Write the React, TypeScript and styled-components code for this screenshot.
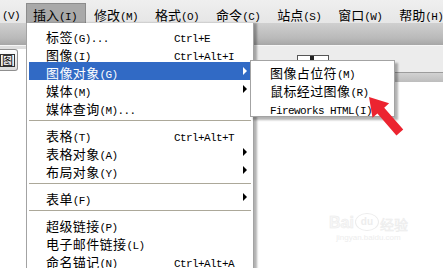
import React from 'react';
import styled, { createGlobalStyle, css } from 'styled-components';

const Global = createGlobalStyle`
  html, body { margin: 0; padding: 0; background: #ffffff; }
  body { font-family: "Noto Sans CJK SC", "Liberation Sans", sans-serif; }
`;

const Screen = styled.div`
  position: relative;
  width: 443px;
  height: 268px;
  overflow: hidden;
  display: flex;
  flex-direction: column;
  background: #ffffff;
`;

const Han = styled.span`
  font-family: "Noto Sans CJK SC", sans-serif;
  font-size: 13px;
  vertical-align: baseline;
`;

const Mono = styled.span`
  font-family: "Liberation Mono", monospace;
  font-size: 11px;
  letter-spacing: -0.6px;
  vertical-align: baseline;
`;

const splitRuns = (s: string) => s.match(/[\u3400-\u9fff]+|[^\u3400-\u9fff]+/g) ?? [];

const Label: React.FC<{ text: string }> = ({ text }) => (
  <>
    {splitRuns(text).map((run, i) =>
      /[\u3400-\u9fff]/.test(run) ? <Han key={i}>{run}</Han> : <Mono key={i}>{run}</Mono>
    )}
  </>
);

/* ---------- menu bar ---------- */
const MenuBar = styled.div`
  height: 23px;
  flex: none;
  display: flex;
  align-items: flex-end;
  gap: 1px;
  background: linear-gradient(#efefef, #e6e6e6);
  padding-left: 2px;
  box-sizing: border-box;
`;

const BarItem = styled.div<{ $active?: boolean; $bare?: boolean }>`
  flex: none;
  height: 20px;
  line-height: 19px;
  white-space: nowrap;
  box-sizing: border-box;
  padding: 0 8px 0 6px;
  color: #000;
  border: 1px solid transparent;
  border-bottom: none;
  ${(p) => p.$bare && css`padding: 0 5px 0 0; border: none;`}
  ${(p) =>
    p.$active &&
    css`
      background: #a9a9a9;
      border-color: #8c8c8c;
    `}
`;

/* ---------- background workspace ---------- */
const Workspace = styled.div`
  flex: 1;
  display: flex;
  flex-direction: column;
`;

const ToolBand = styled.div`
  height: 23px;
  flex: none;
  background: linear-gradient(#d0d0d0, #b9b9b9 70%, #a6a6a6);
  border-bottom: 1px solid #f6f6f6;
  box-sizing: border-box;
`;

const InsertRow = styled.div`
  height: 36px;
  flex: none;
  display: flex;
`;

const ButtonWell = styled.div`
  width: 26px;
  flex: none;
  background: linear-gradient(#dedede 0, #dedede 3px, #ffffff 3px);
  padding-top: 3px;
  box-sizing: border-box;
`;

const ToolButton = styled.div`
  width: 18px;
  height: 22px;
  box-sizing: border-box;
  border: 1px solid #8f8f8f;
  border-left: none;
  border-radius: 0 3px 3px 0;
  background: linear-gradient(#ffffff, #dcdcdc);
  display: flex;
  align-items: center;
  justify-content: center;
`;

const IconGlyph = styled.span`
  font-family: "Noto Sans CJK SC", sans-serif;
  font-size: 11px;
  line-height: 1;
  border: 1px solid #333;
  padding: 0 1px;
  margin-left: -2px;
`;

const InsertStrip = styled.div`
  flex: 1;
  background: linear-gradient(#ececec 0, #ececec 26px, #9c9c9c 26px, #9c9c9c 27px, #d2d2d2 27px, #bdbdbd 100%);
  display: flex;
  align-items: flex-start;
  padding: 9px 0 0 271px;
  box-sizing: border-box;
`;

const DarkChip = styled.div`
  width: 32px;
  height: 7px;
  border: 1px solid #555;
  background: linear-gradient(90deg, #ffffff 0 40%, #222 40% 55%, #ffffff 55%);
  box-sizing: border-box;
`;

const DocArea = styled.div`
  flex: 1;
  background: #ffffff;
`;

/* ---------- dropdown menu ---------- */
const Dropdown = styled.div`
  position: absolute;
  left: 26px;
  top: 23px;
  width: 228px;
  height: 260px;
  box-sizing: border-box;
  background: #ffffff;
  border: 1px solid #a3a3a3;
  border-top: none;
  padding: 3px 2px 0 2px;
  box-shadow: 3px 0 2px rgba(0, 0, 0, 0.3);
  display: flex;
  flex-direction: column;
  letter-spacing: 0.4px;
`;

const Row = styled.div<{ $active?: boolean }>`
  position: relative;
  height: 18px;
  flex: none;
  display: grid;
  grid-template-columns: 128px 1fr 10px;
  align-items: center;
  padding-left: 17px;
  color: #000;
  ${(p) =>
    p.$active &&
    css`
      background: #316ac5;
      color: #ffffff;
    `}
`;

const LabelCell = styled.div`
  height: 18px;
  line-height: 18px;
  white-space: nowrap;
`;

const Shortcut = styled.div`
  height: 18px;
  line-height: 18px;
  white-space: nowrap;
`;

const Caret = styled.div<{ $light?: boolean }>`
  width: 0;
  height: 0;
  margin-left: 2px;
  border-top: 4px solid transparent;
  border-bottom: 4px solid transparent;
  border-left: 4px solid ${(p) => (p.$light ? '#ffffff' : '#000000')};
`;

const Separator = styled.div`
  height: 9px;
  flex: none;
  display: flex;
  align-items: center;
  &::after {
    content: '';
    flex: 1;
    height: 1px;
    background: #aca899;
  }
`;

const Submenu = styled.div`
  position: absolute;
  left: 221px;
  top: -2px;
  width: 145px;
  box-sizing: border-box;
  background: #ffffff;
  border: 1px solid #a3a3a3;
  padding: 1px 0 0 0;
  box-shadow: 3px 3px 2px rgba(0, 0, 0, 0.3);
  display: flex;
  flex-direction: column;
  color: #000;
  z-index: 2;
`;

const SubRow = styled.div`
  height: 18px;
  line-height: 18px;
  padding-left: 19px;
  white-space: nowrap;
`;

/* ---------- overlays ---------- */
const Annotation = styled.svg`
  position: absolute;
  left: 360px;
  top: 90px;
  z-index: 3;
`;

const Watermark = styled.div`
  position: absolute;
  left: 321px;
  top: 213px;
  width: 95px;
  display: flex;
  flex-direction: column;
  align-items: center;
  gap: 3px;
`;

const MarkLine = styled.div`
  display: flex;
  align-items: flex-end;
  gap: 1px;
`;

const MarkBai = styled.span`
  font-family: "Liberation Sans", sans-serif;
  font-weight: bold;
  font-size: 16px;
  line-height: 1;
  color: #f7f7f7;
  -webkit-text-stroke: 0.5px #ebebeb;
`;

const MarkDu = styled.span`
  font-family: "Liberation Sans", sans-serif;
  font-weight: bold;
  font-size: 10px;
  line-height: 1;
  width: 22px;
  height: 16px;
  border-radius: 50%;
  border: 1px solid #ececec;
  display: flex;
  align-items: center;
  justify-content: center;
  color: #ededed;
`;

const MarkHan = styled.span`
  font-family: "Noto Sans CJK SC", sans-serif;
  font-size: 14px;
  line-height: 1;
  color: #f7f7f7;
  -webkit-text-stroke: 0.5px #ebebeb;
`;

const MarkUrl = styled.span`
  font-family: "Liberation Sans", sans-serif;
  font-size: 8px;
  line-height: 1;
  color: #ededed;
`;

type Item =
  | { kind: 'item'; label: string; shortcut?: string; sub?: boolean; active?: boolean }
  | { kind: 'sep' };

const menuItems: Item[] = [
  { kind: 'item', label: '标签(G)...', shortcut: 'Ctrl+E' },
  { kind: 'item', label: '图像(I)', shortcut: 'Ctrl+Alt+I' },
  { kind: 'item', label: '图像对象(G)', sub: true, active: true },
  { kind: 'item', label: '媒体(M)', sub: true },
  { kind: 'item', label: '媒体查询(M)...' },
  { kind: 'sep' },
  { kind: 'item', label: '表格(T)', shortcut: 'Ctrl+Alt+T' },
  { kind: 'item', label: '表格对象(A)', sub: true },
  { kind: 'item', label: '布局对象(Y)', sub: true },
  { kind: 'sep' },
  { kind: 'item', label: '表单(F)', sub: true },
  { kind: 'sep' },
  { kind: 'item', label: '超级链接(P)' },
  { kind: 'item', label: '电子邮件链接(L)' },
  { kind: 'item', label: '命名锚记(N)', shortcut: 'Ctrl+Alt+A' },
];

const subItems = ['图像占位符(M)', '鼠标经过图像(R)', 'Fireworks HTML(I)'];

const barItems = ['插入(I)', '修改(M)', '格式(O)', '命令(C)', '站点(S)', '窗口(W)', '帮助(H)'];

export default function App() {
  return (
    <>
      <Global />
      <Screen>
        <MenuBar>
          <BarItem $bare>
            <Label text="(V)" />
          </BarItem>
          {barItems.map((t, i) => (
            <BarItem key={t} $active={i === 0}>
              <Label text={t} />
            </BarItem>
          ))}
        </MenuBar>
        <Workspace>
          <ToolBand />
          <InsertRow>
            <ButtonWell>
              <ToolButton>
                <IconGlyph>图</IconGlyph>
              </ToolButton>
            </ButtonWell>
            <InsertStrip>
              <DarkChip />
            </InsertStrip>
          </InsertRow>
          <DocArea />
        </Workspace>

        <Dropdown>
          {menuItems.map((it, i) =>
            it.kind === 'sep' ? (
              <Separator key={i} />
            ) : (
              <Row key={i} $active={it.active}>
                <LabelCell>
                  <Label text={it.label} />
                </LabelCell>
                <Shortcut>{it.shortcut && <Mono>{it.shortcut}</Mono>}</Shortcut>
                <div>{it.sub && <Caret $light={it.active} />}</div>
                {it.active && (
                  <Submenu>
                    {subItems.map((s) => (
                      <SubRow key={s}>
                        <Label text={s} />
                      </SubRow>
                    ))}
                  </Submenu>
                )}
              </Row>
            )
          )}
        </Dropdown>

        <Watermark>
          <MarkLine>
            <MarkBai>Bai</MarkBai>
            <MarkDu>du</MarkDu>
            <MarkHan>经验</MarkHan>
          </MarkLine>
          <MarkUrl>jingyan.baidu.com</MarkUrl>
        </Watermark>

        <Annotation width="50" height="50" viewBox="0 0 50 50">
          <g transform="translate(9,7) rotate(49)">
            <polygon
              points="0,0 18,-11 18,-4.5 47,-4.5 47,4.5 18,4.5 18,11"
              fill="#ec2430"
            />
          </g>
        </Annotation>
      </Screen>
    </>
  );
}
